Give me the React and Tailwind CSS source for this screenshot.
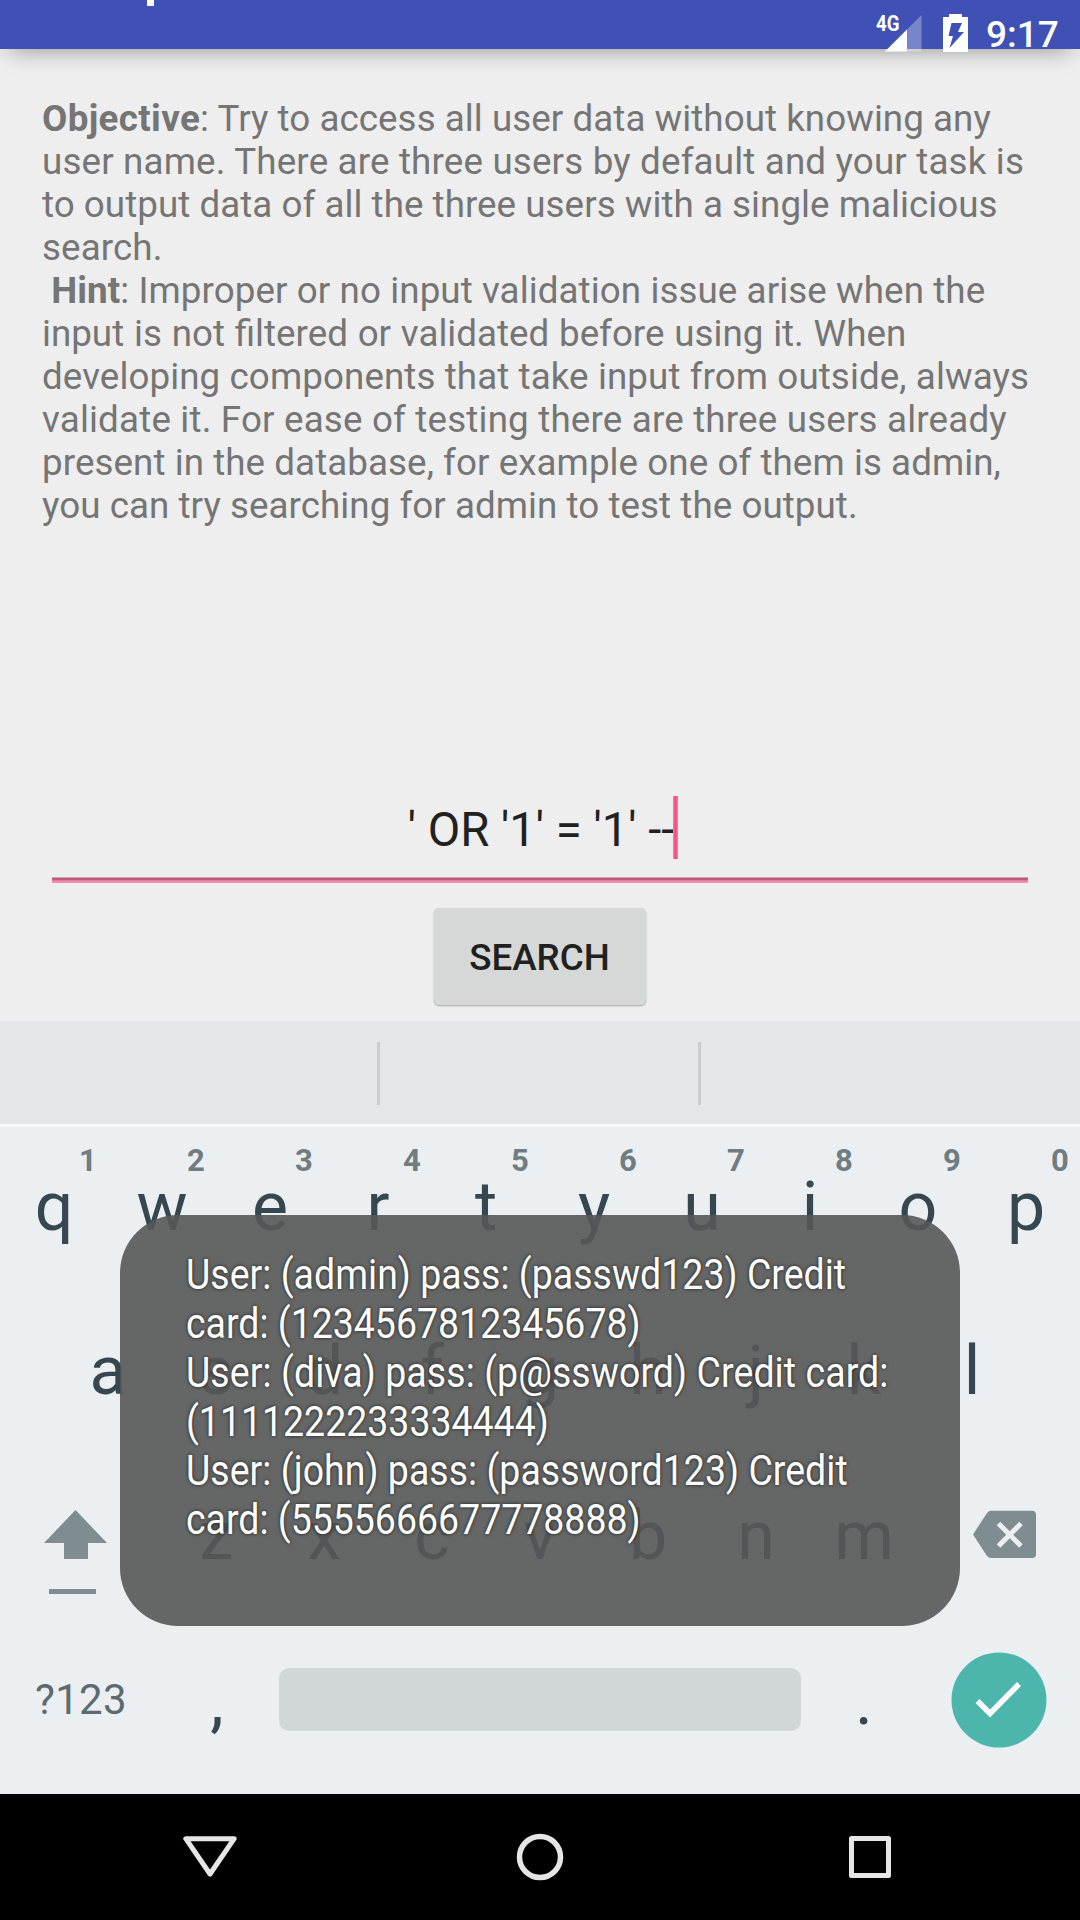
const OBJECTIVE = [
  { text: 'user name. There are three users by default and your task is', fit: 'tracking-[0.166px]' },
  { text: 'to output data of all the three users with a single malicious', fit: 'tracking-[0.04px]' },
  { text: 'search.', fit: 'tracking-[0.1px]' },
];

const HINT = [
  { text: 'input is not filtered or validated before using it. When', fit: '[word-spacing:0.68px]' },
  { text: 'developing components that take input from outside, always', fit: 'tracking-[0.09px]' },
  { text: 'validate it. For ease of testing there are three users already', fit: 'tracking-[0.178px]' },
  { text: 'present in the database, for example one of them is admin,', fit: 'tracking-[0.065px]' },
  { text: 'you can try searching for admin to test the output.', fit: 'tracking-[0.05px]' },
];

const TOAST = [
  { text: 'User: (admin) pass: (passwd123) Credit', fit: 'tracking-[0.03px]' },
  { text: 'card: (1234567812345678)', fit: '' },
  { text: 'User: (diva) pass: (p@ssword) Credit card:', fit: 'tracking-[0.09px]' },
  { text: '(1111222233334444)', fit: '' },
  { text: 'User: (john) pass: (password123) Credit', fit: 'tracking-[0.04px]' },
  { text: 'card: (5555666677778888)', fit: '' },
];

function StatusBar() {
  return (
    <header className="relative z-10 flex h-[49px] shrink-0 items-start bg-[#3f51b5] text-white shadow-[0_10px_24px_-10px_rgba(0,0,0,0.42)]">
      <span className="ml-[147px] h-[6px] w-[7px] bg-white" />
      <span className="ml-auto mt-[12px] w-[22px] origin-left scale-x-[0.85] text-[22px] leading-6 font-bold">4G</span>
      <svg className="-ml-[13px] mt-[14px]" width="37" height="38" viewBox="0 0 37 38">
        <path d="M0 37.5 36.5 1v36.5z" fill="#fff" opacity="0.3" />
        <path d="M0 37.5 22 15.5v22z" fill="#fff" />
      </svg>
      <svg className="ml-[21px] mt-[14px]" width="25" height="38" viewBox="0 0 25 38">
        <path d="M6 0h13v3h6v35H0V3h6z" fill="#fff" />
        <path d="M8.5 9h10.5l-4 9h6L6.500 34l3.500-12H5.500z" fill="#3f51b5" />
      </svg>
      <span className="ml-[18px] mr-[20px] mt-[13px] w-[74px] text-[37px] leading-[43px] font-medium">9:17</span>
    </header>
  );
}

function Content() {
  return (
    <main className="flex h-[970px] shrink-0 flex-col">
      <div className="ml-[42px] mt-[48px] text-[36.75px] leading-[43px] whitespace-pre text-[#757575]">
        <p className="tracking-[0.05px]"><b className="tracking-[0.35px]">Objective</b>: Try to access all user data without knowing any</p>
        {OBJECTIVE.map(({ text, fit }) => <p key={text} className={fit}>{text}</p>)}
        <p className="tracking-[0.085px]"> <b>Hint</b>: Improper or no input validation issue arise when the</p>
        {HINT.map(({ text, fit }) => <p key={text} className={fit}>{text}</p>)}
      </div>
      <div className="mx-[52px] mt-[269px] flex h-[81px] justify-center pl-[5px]">
        <span className="mt-[7px] -mr-px pl-px text-[47.25px] leading-[55px] whitespace-pre text-[#212121]">' OR '1' = '1' --</span>
        <span className="h-[63px] w-[5px] bg-linear-to-r from-[#fc7ba6] via-[#ff4081] to-[#fc7ba6]" />
      </div>
      <div className="mx-[52px] flex flex-col">
        <span className="h-px bg-[#c9a3b2]" />
        <span className="h-[2px] bg-[#bf5878]" />
        <span className="h-px bg-[#d87f9d]" />
        <span className="h-[2px] bg-[#f98bb0]" />
      </div>
      <button className="mt-[25px] ml-[433.5px] h-[97px] w-[212px] self-start rounded-[5px] bg-[#d6d8d7] pt-[2px] text-[36.75px] leading-[43px] font-medium text-[#1f2120] shadow-[0_1px_2px_rgba(0,0,0,0.3)]">SEARCH</button>
    </main>
  );
}

function Key({ label, hint }) {
  return (
    <div className="relative flex w-[108px] justify-center text-[68px] leading-[80px] text-[#37474f]">
      {label}
      {hint && <span className="absolute -top-[24px] left-[79px] text-[31px] leading-[36px] font-bold text-[#6f7c82]">{hint}</span>}
    </div>
  );
}

function Keyboard() {
  return (
    <section className="flex h-[775px] shrink-0 flex-col bg-[#ebeff2]">
      <div className="flex h-[108px] shrink-0 items-start border-t-2 border-b-[3px] border-t-[#f0f0f0] border-b-[#f7f9fa] bg-[#e3e7ea] pt-[21px]">
        <span className="ml-[377px] h-[63px] w-[3px] bg-[#c9cdd0]" />
        <span className="ml-[318px] h-[63px] w-[3px] bg-[#c9cdd0]" />
      </div>
      <div className="mt-[40px] flex h-[164px] shrink-0">
        {[...'qwertyuiop'].map((k, i) => <Key key={k} label={k} hint={String((i + 1) % 10)} />)}
      </div>
      <div className="flex h-[165px] shrink-0 justify-center">
        {[...'asdfghjkl'].map((k) => <Key key={k} label={k} />)}
      </div>
      <div className="flex h-[165px] shrink-0 justify-between">
        <svg className="mt-[14px] ml-[44px] w-[118px]" height="85" viewBox="0 0 118 85" fill="#7f8c90">
          <path d="M31.500 0 63 33H44v16H20V33H0z" />
          <path d="M5 79h47v5H5z" />
        </svg>
        {[...'zxcvbnm'].map((k) => <Key key={k} label={k} />)}
        <svg className="mt-[14px] ml-[55px] mr-[44px]" width="63" height="49" viewBox="0 0 63 49">
          <path d="M0 24.500 14 3Q16 .7 18 .7H59Q63 .7 63 4.700V44.500Q63 48 59 48H18Q16 48 14 46z" fill="#7f8c90" />
          <path d="M25.500 13.500 48 36M48 13.500 25.500 36" stroke="#ebeff2" strokeWidth="5" />
        </svg>
      </div>
      <div className="flex">
        <span className="ml-[35px] mt-[14px] w-[128px] text-[42px] leading-[50px] tracking-[0.3px] text-[#5c6b71]">?123</span>
        <Key label="," />
        <span className="ml-[8px] mt-[7px] h-[63px] w-[522px] rounded-[10px] bg-[#d1d6d9]" />
        <span className="ml-[9px]"><Key label="." /></span>
        <svg className="-mt-[9px] ml-[33px]" width="96" height="96" viewBox="0 0 96 96">
          <circle cx="48" cy="48" r="47.500" fill="#4db6ac" />
          <path d="M26.500 49 39 61.500 68 32" fill="none" stroke="#fff" strokeWidth="5.500" />
        </svg>
      </div>
    </section>
  );
}

function NavBar() {
  return (
    <nav className="flex h-[126px] shrink-0 items-center justify-center gap-[282px] bg-black">
      <svg width="48" height="48" viewBox="0 0 48 48" className="overflow-visible" fill="none" stroke="#e6e6e6" strokeWidth="5" strokeLinejoin="round">
        <path d="M-.2 5.700H48.200L24 41z" />
      </svg>
      <svg width="48" height="48" viewBox="0 0 48 48" fill="none" stroke="#e6e6e6" strokeWidth="5.500">
        <circle cx="24" cy="24" r="20.500" />
      </svg>
      <svg width="48" height="48" viewBox="0 0 48 48" fill="none" stroke="#e6e6e6" strokeWidth="5" strokeLinejoin="round">
        <rect x="5.500" y="5.500" width="37" height="37" />
      </svg>
    </nav>
  );
}

function Toast() {
  return (
    <div className="absolute top-[1215px] left-[120px] z-20 h-[411px] w-[840px] rounded-[58px] bg-[#565656]/90 pt-[35px] pl-[66px]">
      <div className="origin-left scale-x-[0.892] text-[42px] leading-[49px] font-normal whitespace-pre text-white [text-shadow:0_0_4px_rgba(0,0,0,0.75)]">
        {TOAST.map(({ text, fit }) => <p key={text} className={fit}>{text}</p>)}
      </div>
    </div>
  );
}

export default function App() {
  return (
    <div className="relative flex h-[1920px] w-[1080px] flex-col overflow-hidden bg-[#eeeeee] font-[Roboto,sans-serif]">
      <StatusBar />
      <Content />
      <Keyboard />
      <NavBar />
      <Toast />
    </div>
  );
}
